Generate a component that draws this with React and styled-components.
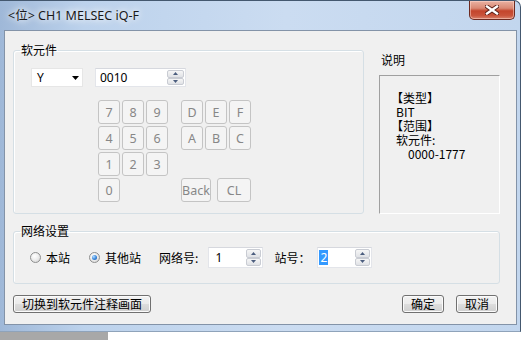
import React from 'react';
import styled, { createGlobalStyle } from 'styled-components';

const UI = '"Noto Sans", "Noto Sans CJK SC", sans-serif';
const CJK = '"Noto Sans CJK SC", "Noto Sans", sans-serif';

const GlobalStyle = createGlobalStyle`
  html, body {
    margin: 0;
    padding: 0;
    background: #fff;
  }
  body {
    font-family: ${UI};
    font-size: 12px;
    color: #000;
  }
`;

const Desktop = styled.div`
  width: 525px;
  height: 340px;
  overflow: hidden;
  display: flex;
  flex-direction: column;
  background: #fff;
`;

const Window = styled.div`
  width: 521px;
  height: 332px;
  box-sizing: border-box;
  border: 1px solid #44586f;
  border-left: none;
  border-bottom-color: #8fa3ba;
  border-radius: 0 7px 0 0;
  background: linear-gradient(90deg, #9fb8d8 0%, #bcd2ec 16%, #cbdcf1 55%, #c2d6ee 100%);
  display: flex;
  flex-direction: column;
`;

const TitleBar = styled.div`
  height: 29px;
  display: flex;
  justify-content: space-between;
  align-items: flex-start;
  padding-left: 8px;
`;

const Title = styled.div`
  font-family: ${UI};
  font-size: 12.5px;
  line-height: 29px;
  color: #1a1a1a;
  text-shadow: 0 0 6px #fff, 0 0 10px #fff;
`;

const CloseButton = styled.div`
  width: 46px;
  height: 19px;
  margin-right: 5px;
  box-sizing: border-box;
  border: 1px solid #6d2a20;
  border-top: none;
  border-radius: 0 0 5px 5px;
  background: linear-gradient(180deg, #eab2a3 0%, #d98873 40%, #c3452c 55%, #c9533a 80%, #d8826c 100%);
  box-shadow: inset 0 0 0 1px rgba(255, 220, 210, 0.5);
  display: flex;
  align-items: center;
  justify-content: center;
`;

const Client = styled.div`
  flex: 1;
  margin: 0 3px 6px 4px;
  border: 1px solid #8393a8;
  background: #f0f0f0;
  padding: 11px 15px 10px 8px;
  display: flex;
  flex-direction: column;
`;

const TopRow = styled.div`
  display: flex;
  gap: 15px;
  height: 172px;
`;

const Group = styled.fieldset`
  margin: ${p => p.$mt || 0}px 0 0 0;
  padding: 0;
  min-width: 0;
  box-sizing: border-box;
  width: ${p => p.$w}px;
  height: ${p => p.$h}px;
  border: 1px solid #d5dfe5;
  border-radius: 3px;
  box-shadow: inset 1px 1px 0 #fff;
`;

const Legend = styled.legend`
  margin-left: 6px;
  padding: 0 1px;
  font-family: ${CJK};
  font-size: 12px;
  line-height: 16px;
`;

const DeviceBody = styled.div`
  padding: 10px 0 0 17px;
`;

const InputRow = styled.div`
  display: flex;
  gap: 12px;
`;

const Select = styled.div`
  width: 52px;
  height: 19px;
  box-sizing: border-box;
  border: 1px solid #e6e6e6;
  background: #fff;
  display: flex;
  align-items: center;
  justify-content: space-between;
  padding: 0 3px 0 5px;
  font-family: ${UI};
  font-size: 12px;
`;

const TextBox = styled.div`
  width: ${p => p.$w}px;
  height: ${p => p.$h}px;
  box-sizing: border-box;
  border: 1px solid #e3e5ea;
  border-top-color: #d6d8de;
  background: #fff;
  display: flex;
  align-items: center;
  justify-content: space-between;
  padding: 0 1px 0 ${p => p.$pl}px;
  font-family: ${UI};
  font-size: 12px;
`;

const Selected = styled.span`
  background: #3399ff;
  color: #fff;
  padding: 0 1px;
  line-height: 15px;
`;

const Spinner = styled.div`
  width: ${p => p.$w}px;
  height: calc(100% - 2px);
  display: flex;
  flex-direction: column;
`;

const SpinHalf = styled.div`
  flex: 1;
  box-sizing: border-box;
  border: 1px solid #c9ccd3;
  border-radius: 2px;
  background: linear-gradient(180deg, #f6f6f6, #e0e2e6);
  display: flex;
  align-items: center;
  justify-content: center;
`;

const Keypad = styled.div`
  margin: 13px 0 0 67px;
  display: grid;
  grid-template-columns: 22px 22px 22px 9px 22px 22px 22px;
  grid-template-rows: repeat(4, 24px);
  gap: 2px;
`;

const Key = styled.div`
  grid-column: ${p => p.$col};
  grid-row: ${p => p.$row};
  width: ${p => (p.$w ? `${p.$w}px` : 'auto')};
  box-sizing: border-box;
  border: 1px solid #c4c4c4;
  border-radius: 3px;
  background: #f4f4f4;
  color: #878787;
  font-family: ${UI};
  font-size: 12.5px;
  display: flex;
  align-items: center;
  justify-content: center;
`;

const KeyPair = styled.div`
  grid-column: 5 / 8;
  grid-row: 4;
  display: flex;
  justify-content: space-between;
`;

const InfoPanel = styled.div`
  width: 121px;
  display: flex;
  flex-direction: column;
`;

const InfoLabel = styled.div`
  margin-top: 10px;
  padding-left: 2px;
  font-family: ${CJK};
  font-size: 12px;
  line-height: 16px;
`;

const InfoBox = styled.div`
  flex: 1;
  margin-top: 7px;
  border-top: 1px solid #a0a0a0;
  border-left: 1px solid #a0a0a0;
  border-right: 1px solid #fff;
  border-bottom: 1px solid #fff;
  padding: 15px 0 0 11px;
`;

const InfoLine = styled.div`
  height: 14px;
  padding-left: ${p => p.$indent || 0}px;
  font-family: ${CJK};
  font-size: 12px;
  line-height: 14px;
`;

const NetBody = styled.div`
  padding: 8px 0 0 16px;
  display: flex;
  align-items: center;
  height: 21px;
`;

const Radio = styled.label`
  display: flex;
  align-items: center;
  gap: 5px;
  margin-left: ${p => p.$ml || 0}px;
  font-family: ${CJK};
  font-size: 12px;
`;

const RadioDot = styled.span`
  width: 11px;
  height: 11px;
  box-sizing: border-box;
  border-radius: 50%;
  border: 1px solid #8e8f8f;
  background: radial-gradient(circle at 40% 35%, #ffffff 0%, #eeeeee 45%, #cfcfcf 100%);
  display: flex;
  align-items: center;
  justify-content: center;

  &::after {
    content: '';
    display: ${p => (p.$checked ? 'block' : 'none')};
    width: 5px;
    height: 5px;
    border-radius: 50%;
    background: radial-gradient(circle at 35% 35%, #b8e0ff 0%, #3d8be0 50%, #174f9c 100%);
  }
`;

const FieldLabel = styled.span`
  margin: 0 ${p => p.$mr}px 0 ${p => p.$ml}px;
  font-family: ${CJK};
  font-size: 12px;
`;

const ButtonRow = styled.div`
  margin-top: 11px;
  display: flex;
  justify-content: space-between;
`;

const ButtonGroup = styled.div`
  display: flex;
  gap: 12px;
  margin-right: 3px;
`;

const Button = styled.div`
  width: ${p => p.$w}px;
  height: 18px;
  box-sizing: border-box;
  border: 1px solid #707070;
  border-radius: 3px;
  background: linear-gradient(180deg, #f2f2f2 0%, #ebebeb 50%, #dddddd 51%, #cfcfcf 100%);
  box-shadow: inset 0 0 0 1px #fbfbfb;
  display: flex;
  align-items: center;
  justify-content: center;
  font-family: ${CJK};
  font-size: 12px;
  line-height: 16px;
`;

const BottomBand = styled.div`
  flex: 1;
  display: flex;
`;

const Taskbar = styled.div`
  width: 108px;
  background: #a8a8a8;
`;

const Arrow = ({ up, w = 7, h = 4, color = '#000' }) => (
  <svg width={w} height={h} viewBox={`0 0 ${w} ${h}`}>
    <polygon
      points={up ? `0,${h} ${w},${h} ${w / 2},0` : `0,0 ${w},0 ${w / 2},${h}`}
      fill={color}
    />
  </svg>
);

const Spin = ({ w }) => (
  <Spinner $w={w}>
    <SpinHalf><Arrow up w={5} h={3} color="#4b5d7e" /></SpinHalf>
    <SpinHalf><Arrow w={5} h={3} color="#4b5d7e" /></SpinHalf>
  </Spinner>
);

const digits = [
  ['7', 1, 1], ['8', 2, 1], ['9', 3, 1],
  ['4', 1, 2], ['5', 2, 2], ['6', 3, 2],
  ['1', 1, 3], ['2', 2, 3], ['3', 3, 3],
  ['0', 1, 4],
  ['D', 5, 1], ['E', 6, 1], ['F', 7, 1],
  ['A', 5, 2], ['B', 6, 2], ['C', 7, 2],
];

export default function App() {
  return (
    <Desktop>
      <GlobalStyle />
      <Window>
        <TitleBar>
          <Title>&lt;位&gt; CH1 MELSEC iQ-F</Title>
          <CloseButton>
            <svg width="14" height="10" viewBox="0 0 14 10">
              <path d="M2 1.5 L12 8.5 M12 1.5 L2 8.5" stroke="#5a1f17" strokeWidth="4.2" strokeLinecap="square" />
              <path d="M2 1.5 L12 8.5 M12 1.5 L2 8.5" stroke="#fff" strokeWidth="2.4" strokeLinecap="square" />
            </svg>
          </CloseButton>
        </TitleBar>

        <Client>
          <TopRow>
            <Group $w={351} $h={172}>
              <Legend>软元件</Legend>
              <DeviceBody>
                <InputRow>
                  <Select>
                    <span>Y</span>
                    <Arrow w={7} h={4} />
                  </Select>
                  <TextBox $w={91} $h={19} $pl={4}>
                    <span>0010</span>
                    <Spin w={17} />
                  </TextBox>
                </InputRow>
                <Keypad>
                  {digits.map(([k, c, r]) => (
                    <Key key={k} $col={c} $row={r}>{k}</Key>
                  ))}
                  <KeyPair>
                    <Key $w={30}>Back</Key>
                    <Key $w={34}>CL</Key>
                  </KeyPair>
                </Keypad>
              </DeviceBody>
            </Group>

            <InfoPanel>
              <InfoLabel>说明</InfoLabel>
              <InfoBox>
                <InfoLine>【类型】</InfoLine>
                <InfoLine $indent={5}>BIT</InfoLine>
                <InfoLine>【范围】</InfoLine>
                <InfoLine $indent={5}>软元件:</InfoLine>
                <InfoLine $indent={17}>0000-1777</InfoLine>
              </InfoBox>
            </InfoPanel>
          </TopRow>

          <Group $w={487} $h={61} $mt={9}>
            <Legend>网络设置</Legend>
            <NetBody>
              <Radio>
                <RadioDot />
                本站
              </Radio>
              <Radio $ml={19}>
                <RadioDot $checked />
                其他站
              </Radio>
              <FieldLabel $ml={18} $mr={10}>网络号:</FieldLabel>
              <TextBox $w={55} $h={21} $pl={6}>
                <span>1</span>
                <Spin w={15} />
              </TextBox>
              <FieldLabel $ml={11} $mr={7}>站号：</FieldLabel>
              <TextBox $w={55} $h={21} $pl={1}>
                <Selected>2</Selected>
                <Spin w={15} />
              </TextBox>
            </NetBody>
          </Group>

          <ButtonRow>
            <Button $w={138}>切换到软元件注释画面</Button>
            <ButtonGroup>
              <Button $w={42}>确定</Button>
              <Button $w={42}>取消</Button>
            </ButtonGroup>
          </ButtonRow>
        </Client>
      </Window>
      <BottomBand>
        <Taskbar />
      </BottomBand>
    </Desktop>
  );
}
